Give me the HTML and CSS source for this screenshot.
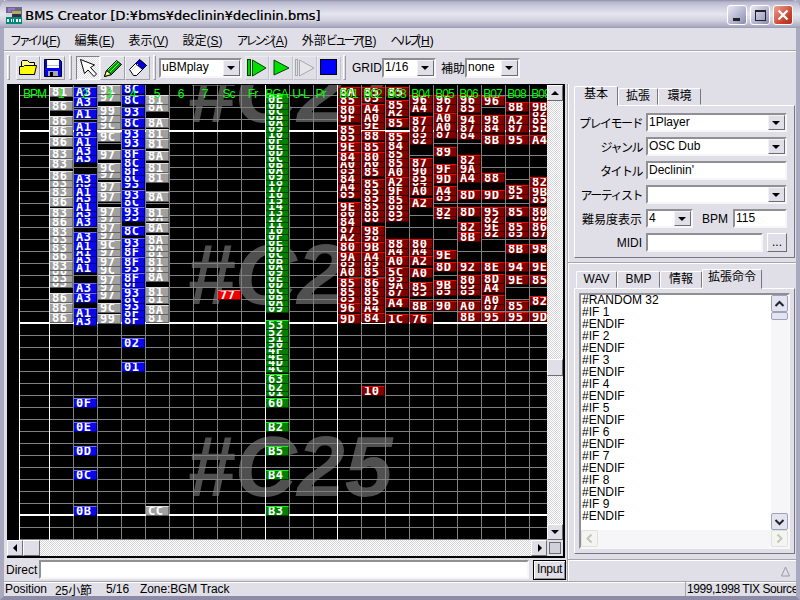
FILE: index.html
```html
<!DOCTYPE html>
<html lang="ja">
<head>
<meta charset="utf-8">
<title>BMS Creator</title>
<link rel="stylesheet" href="styles.css">
</head>
<body>
<div class="window">
  <header class="titlebar">
    <svg class="appicon" width="16" height="17" viewBox="0 0 16 17"><rect width="16" height="17" fill="#6a6a80"/><path d="M2 1h7v2H5v2H2z" fill="#9a70d0"/><path d="M6 4h9v3H6z" fill="#b8a860"/><path d="M0 6h6v4H0z" fill="#d8d8e0"/><path d="M6 7h9v3H6z" fill="#303048"/><rect x="0" y="10" width="16" height="7" fill="#008878"/><path d="M1 12h2v3H1zM5 12h1v3H5zM7 12h1v3H7zM10 12h2v3h-2zM13 12h2v3h-2z" fill="#fff"/></svg>
    <span class="title">BMS Creator [D:¥bms¥declinin¥declinin.bms]</span>
    <div class="winbtns">
      <span class="wb"><svg width="18" height="18" viewBox="0 0 18 18"><rect x="5" y="12" width="7" height="3" fill="#222"/></svg></span>
      <span class="wb"><svg width="18" height="18" viewBox="0 0 18 18"><rect x="4.500" y="4.500" width="10" height="10" fill="none" stroke="#222"/><rect x="4" y="4" width="11" height="2" fill="#222"/></svg></span>
      <span class="wb close"><svg width="18" height="18" viewBox="0 0 18 18"><path d="M4.500 4.500l9 9M13.500 4.500l-9 9" stroke="#fff" stroke-width="2.400"/></svg></span>
    </div>
  </header>
  <nav class="menubar">
    <span class="mi"><span class="kana">ファイル</span>(<u>F</u>)</span><span class="mi">編集(<u>E</u>)</span><span class="mi">表示(<u>V</u>)</span><span class="mi">設定(<u>S</u>)</span><span class="mi"><span class="kana">アレンジ</span>(<u>A</u>)</span><span class="mi">外部<span class="kana">ビューア</span>(<u>B</u>)</span><span class="mi"><span class="kana">ヘルプ</span>(<u>H</u>)</span>
  </nav>
  <div class="toolbar">
    <i class="grip"></i>
    <span class="tb first"><svg width="19" height="17" viewBox="0 0 19 17"><path d="M2.500 15.500V2.500l1-1h5l2 2h5v12z" fill="#ffff80" stroke="#000"/><path d="M.5 15.500v-8h4l1-1h12l-2 9z" fill="#ffff00" stroke="#000"/></svg></span>
    <span class="tb save"><svg width="18" height="18" viewBox="0 0 18 18"><path d="M.5.5h15l2 2v15H.5z" fill="#0000ff" stroke="#000"/><rect x="3" y="1" width="12" height="8" fill="#fff"/><rect x="3" y="6" width="12" height="1" fill="#c0c0c0"/><rect x="4" y="12" width="10" height="5" fill="#a8a8a8"/><rect x="6" y="13" width="3" height="4" fill="#000"/></svg></span>
    <i class="grip g2"></i>
    <span class="tb big pressed"><svg width="19" height="20" viewBox="0 0 19 20"><path d="M1.500 1.500l4 14 3.500-3.500 6 6.500 2.500-2.500-6-6.500 4-2.500z" fill="#fff" stroke="#000"/></svg></span>
    <span class="tb big"><svg width="20" height="20" viewBox="0 0 20 20"><path d="M1.500 18.500l2-6L13.500 2.500l5 4-10 10z" fill="#00a000" stroke="#000"/><path d="M5 12L14 3M7 14l9-9" stroke="#70f070"/><path d="M1.500 18.500l2-6 5 4z" fill="#ffff80" stroke="#000"/></svg></span>
    <span class="tb big"><svg width="20" height="20" viewBox="0 0 20 20"><path d="M1.500 11.500l10-10 7 6-10 10h-3z" fill="#fff" stroke="#000"/><path d="M7.500 5.500l4-4 7 6-4 4z" fill="#0000e0" stroke="#000"/><path d="M4 12l6-6" stroke="#c8c8c8"/></svg></span>
    <i class="grip g3"></i>
    <div class="combo ubm"><span class="val">uBMplay</span><span class="arrow"></span></div>
    <span class="tb play"><svg width="20" height="18" viewBox="0 0 20 18"><rect x=".5" y=".5" width="3" height="16" fill="#00d000" stroke="#004000"/><path d="M5.500 1v16L19 9z" fill="#00e000" stroke="#004000"/></svg></span>
    <span class="tb play"><svg width="17" height="18" viewBox="0 0 17 18"><path d="M1 1v15l15-7z" fill="#00e000" stroke="#004000"/></svg></span>
    <span class="tb play"><svg width="20" height="18" viewBox="0 0 20 18"><rect x=".5" y=".5" width="2" height="16" fill="none" stroke="#a8a8a8"/><path d="M4.500 1v16L19 9z" fill="#e6e6ea" stroke="#a8a8a8"/></svg></span>
    <span class="tb play"><svg width="18" height="18" viewBox="0 0 18 18"><rect x=".5" y=".5" width="16" height="15" fill="#0000ff" stroke="#000"/></svg></span>
    <i class="grip g4"></i>
    <span class="tlabel">GRID</span>
    <div class="combo grid-c"><span class="val">1/16</span><span class="arrow"></span></div>
    <span class="tlabel hojo">補助</span>
    <div class="combo none-c"><span class="val">none</span><span class="arrow"></span></div>
  </div>
  <main class="main">
    <section class="left">
      <div class="editor">
        <div class="canvas" id="canvas">
          <span class="mark m1">#C27</span>
          <span class="mark m2">#C26</span>
          <span class="mark m3">#C25</span>
          <div class="grid-a"></div>
          <div class="grid-b"></div>
          <i class="wv v19"></i><i class="wv v49"></i><i class="wv v265"></i><i class="wv v337"></i>
          <i class="wh h131"></i><i class="wh h323"></i><i class="wh h515"></i>
          <div id="notes"></div>
          <div id="heads"></div>
        </div>
        <div class="vscroll">
          <span class="sb up"></span><span class="track"><i class="thumb-v"></i></span><span class="sb down"></span>
        </div>
        <div class="hscroll">
          <span class="sb leftb"></span><span class="thumb-h"></span><span class="track"></span><span class="sb rightb"></span>
        </div>
        <div class="corner"><i></i></div>
      </div>
      <div class="direct">
        <span class="dlabel">Direct</span>
        <span class="field dfield"></span>
        <span class="inputbtn">Input</span>
      </div>
    </section>
    <aside class="right">
      <div class="tabs top-tabs">
        <span class="tab on t1">基本</span><span class="tab t2">拡張</span><span class="tab t3">環境</span>
      </div>
      <div class="panel basic">
        <div class="row"><label><span class="kana2">プレイモード</span></label><div class="combo fill"><span class="val">1Player</span><span class="arrow"></span></div></div>
        <div class="row"><label><span class="kana2">ジャンル</span></label><div class="combo fill"><span class="val">OSC Dub</span><span class="arrow"></span></div></div>
        <div class="row"><label><span class="kana2">タイトル</span></label><span class="field fill">Declinin'</span></div>
        <div class="row"><label><span class="kana2">アーティスト</span></label><div class="combo fill"><span class="val"></span><span class="arrow"></span></div></div>
        <div class="row"><label>難易度表示</label><div class="combo diff"><span class="val">4</span><span class="arrow"></span></div><span class="bpm">BPM</span><span class="field fill">115</span></div>
        <div class="row"><label>MIDI</label><span class="field fill"></span><span class="dots">...</span></div>
      </div>
      <hr class="rule">
      <div class="tabs low-tabs">
        <span class="tab l1">WAV</span><span class="tab l2">BMP</span><span class="tab l3">情報</span><span class="tab on l4">拡張命令</span>
      </div>
      <div class="panel lower">
        <div class="memo">
          <div class="memo-top">
            <div class="lines">#RANDOM 32<br>#IF 1<br>#ENDIF<br>#IF 2<br>#ENDIF<br>#IF 3<br>#ENDIF<br>#IF 4<br>#ENDIF<br>#IF 5<br>#ENDIF<br>#IF 6<br>#ENDIF<br>#IF 7<br>#ENDIF<br>#IF 8<br>#ENDIF<br>#IF 9<br>#ENDIF</div>
            <div class="mscroll"><span class="mb"><svg width="11" height="8" viewBox="0 0 11 8"><path d="M1.500 6l4-4 4 4" fill="none" stroke="#223" stroke-width="2"/></svg></span><span class="mthumb"></span><span class="mspace"></span><span class="mb"><svg width="11" height="8" viewBox="0 0 11 8"><path d="M1.500 2l4 4 4-4" fill="none" stroke="#223" stroke-width="2"/></svg></span></div>
          </div>
          <div class="memo-bottom"><span class="mdis"><svg width="7" height="11" viewBox="0 0 7 11"><path d="M5.500 1.500l-4 4 4 4" fill="none" stroke="#c4c4c0" stroke-width="2"/></svg></span><span class="mspace"></span><span class="mdis"><svg width="7" height="11" viewBox="0 0 7 11"><path d="M1.500 1.500l4 4-4 4" fill="none" stroke="#c4c4c0" stroke-width="2"/></svg></span></div>
        </div>
      </div>
      <hr class="rule r2">
      <div class="tri-row"><svg width="9" height="11" viewBox="0 0 9 11"><path d="M4.500 1L8.500 10H.5z" fill="none" stroke="#9a9aa0"/></svg></div>
    </aside>
  </main>
  <footer class="status">
    <span class="s1">Position</span><span class="s2">25小節</span><span class="s3">5/16</span><span class="s4">Zone:BGM Track</span><span class="s5">1999,1998 TIX Source</span>
  </footer>
</div>
<script src="script.js"></script>
</body>
</html>
```
FILE: styles.css
```css
* { box-sizing: border-box; }
html, body { margin: 0; padding: 0; }
body { width: 800px; height: 600px; overflow: hidden; background: #e0dfe8; font: 12px "Liberation Sans", "Noto Sans CJK JP", sans-serif; color: #000; }
.window { width: 800px; height: 600px; display: flex; flex-direction: column; background: #e0dfe8; border-left: 4px solid #a9a9c0; border-right: 4px solid #a9a9c0; border-bottom: 4px solid #8c8ca6; box-shadow: inset 1px 0 #e0dfe8, inset -1px 0 #e0dfe8; }
.kana { letter-spacing: -3.200px; }
.kana2 { letter-spacing: -1.500px; }

.titlebar { margin: 0 -4px; height: 28px; flex: none; display: flex; align-items: center; padding: 2px 7px 0 6px; border-radius: 8px 8px 0 0; background: linear-gradient(#8f8fa9 0, #b6b6cb 2px, #c6c6d8 5px, #e6e6f0 14px, #d3d3e0 20px, #aeaec4 26px, #9a9ab4 28px); }
.appicon { flex: none; }
.title { margin-left: 3px; font: 13px "DejaVu Sans", sans-serif; text-shadow: .5px 0 0 rgba(0,0,0,.7), 1px 1px 0 rgba(255,255,255,.3); white-space: nowrap; }
.winbtns { margin-left: auto; display: flex; gap: 3px; }
.wb { width: 20px; height: 20px; border: 1px solid #fff; border-radius: 3px; background: linear-gradient(135deg, #e8e8f4, #a8a8c8 70%, #8888a8); display: block; }
.wb svg { display: block; }
.close { background: linear-gradient(135deg, #f0a090, #c83c28 70%, #b03020); }

.menubar { height: 22px; flex: none; display: flex; align-items: center; margin-left: -1px; }
.mi { padding: 0 7px; white-space: nowrap; }

.toolbar { height: 34px; flex: none; position: relative; display: flex; align-items: center; border-top: 1px solid #a5a5ad; box-shadow: inset 0 1px #fff; padding-left: 3px; }
.grip { flex: none; width: 3px; height: 25px; border: 1px solid; border-color: #fff #9a9aa0 #9a9aa0 #fff; }
.g2 { margin-left: 4px; }
.g3 { margin-left: 3px; }
.g4 { margin-left: 2px; }
.tb { flex: none; display: flex; align-items: center; justify-content: center; width: 24px; height: 24px; border: 1px solid; border-color: #f4f4f8 #a0a0a8 #a0a0a8 #f4f4f8; }
.tb.first { margin-left: 6px; }
.tb.save { width: 25px; }
.tb.big { width: 25px; }
.tb.pressed { width: 24px; margin-left: 4px; border-color: #808086 #fff #fff #808086; background: repeating-conic-gradient(#fff 0 25%, #e0dfe8 0 50%) 0 0 / 2px 2px; }
.tb.play { width: 24px; border-color: #ecebf2 #c4c4cc #c4c4cc #ecebf2; }
.tb svg { display: block; }
.combo { display: flex; height: 19px; border: 2px solid; border-color: #8f8f94 #f7f7fa #f7f7fa #8f8f94; background: #fff; align-items: stretch; }
.toolbar .combo { height: 20px; }
.ubm { width: 83px; margin: 0 3px; }
.grid-c { width: 54px; }
.none-c { width: 55px; }
.val { flex: 1; padding-left: 1px; line-height: 14px; white-space: nowrap; overflow: hidden; }
.arrow { width: 17px; flex: none; background: #e0dfe8; border: 1px solid; border-color: #f4f4f8 #6c6c72 #6c6c72 #f4f4f8; position: relative; }
.arrow::after { content: ""; position: absolute; left: 3px; top: 5px; border: 4px solid transparent; border-top: 4px solid #000; border-bottom: 0; }
.tlabel { margin-left: 6px; white-space: nowrap; }
.hojo { margin-left: 5px; }

.main { flex: 1; display: flex; min-height: 0; }
.left { width: 564px; flex: none; display: flex; flex-direction: column; border-right: 1px solid #a5a5ad; padding-left: 3px; box-shadow: 1px 0 #fff; }
.editor { width: 558px; height: 474px; flex: none; background: #000; padding: 1px 2px 2px 0; display: grid; grid-template-columns: 540px 16px; grid-template-rows: 455px 16px; }
.canvas { position: relative; overflow: hidden; background: #000; }
.mark { position: absolute; font: italic bold 86px "Liberation Sans", sans-serif; color: #505050; line-height: 86px; white-space: nowrap; }
.m1 { left: 180px; top: -36px; }
.m2 { left: 180px; top: 146px; }
.m3 { left: 180px; top: 338px; }
.grid-a, .grid-b { position: absolute; top: 0; bottom: 0; background-repeat: repeat; }
.grid-a { left: 12px; width: 30px; background-image: linear-gradient(#808080 1px, transparent 1px); background-size: 100% 12px; background-position: 0 10px; }
.grid-b { left: 42px; right: 0; background-image: linear-gradient(#808080 1px, transparent 1px), linear-gradient(90deg, #808080 1px, transparent 1px); background-size: 24px 12px; background-position: 0 10px, 0 0; }
.wv { position: absolute; top: 0; bottom: 0; width: 1px; background: #fff; }
.v19 { left: 12px; } .v49 { left: 42px; } .v265 { left: 258px; } .v337 { left: 330px; }
.wh { position: absolute; left: 12px; right: 0; height: 2px; background: #fff; }
.h131 { top: 45px; } .h323 { top: 237px; } .h515 { top: 429px; }

.note { position: absolute; width: 23px; height: 10px; border-top: 1px solid; border-right: 1px solid; border-bottom: 1px solid; color: #fff; font: bold 12px/8px "DejaVu Sans Mono", monospace; padding-left: 2px; letter-spacing: .6px; white-space: nowrap; overflow: hidden; }
.gray { background: #a0a0a0; border-color: #e0e0e0 #707070 #606060; }
.blue { background: #0808e8; border-color: #6a6aff #000090 #000090; }
.green { background: #008000; border-color: #00ff00 #004000 #004000; }
.red { background: #800000; border-color: #ff0000 #400000 #400000; }
.hot { background: #f00000; border-color: #ff7070 #800000 #800000; }
.head { position: absolute; top: 2px; height: 14px; text-align: center; color: #0f0; font: 12px/14px "Liberation Sans", sans-serif; letter-spacing: -1px; white-space: nowrap; }

.vscroll { display: flex; flex-direction: column; }
.hscroll { display: flex; }
.track { flex: 1; position: relative; background: repeating-conic-gradient(#fff 0 25%, #d4d4d8 0 50%) 0 0 / 2px 2px; }
.thumb-v { position: absolute; left: 0; right: 0; top: 258px; height: 17px; background: #e0dfe8; border: 1px solid; border-color: #fff #6c6c72 #6c6c72 #fff; }
.thumb-h { width: 17px; flex: none; background: #e0dfe8; border: 1px solid; border-color: #fff #6c6c72 #6c6c72 #fff; }
.sb { flex: none; display: block; width: 16px; height: 16px; background: #e0dfe8; border: 1px solid; border-color: #fff #6c6c72 #6c6c72 #fff; position: relative; }
.sb::after { content: ""; position: absolute; left: 3px; top: 3px; border: 4px solid transparent; }
.up::after { border-bottom-color: #000; border-top: 0; top: 5px; }
.down::after { border-top-color: #000; border-bottom: 0; top: 5px; }
.leftb::after { border-right-color: #000; border-left: 0; left: 5px; }
.rightb::after { border-left-color: #000; border-right: 0; left: 6px; }
.corner { background: #e0dfe8; padding: 2px; }
.corner i { display: block; width: 12px; height: 12px; border: 1px solid #6c6c72; background: #d0d0d8; }

.direct { display: flex; align-items: center; flex: 1; margin-left: -1px; }
.dlabel { width: 32px; flex: none; }
.field { display: block; height: 19px; border: 2px solid; border-color: #8f8f94 #f7f7fa #f7f7fa #8f8f94; background: #fff; padding-left: 1px; line-height: 14px; white-space: nowrap; overflow: hidden; }
.dfield { width: 490px; margin-left: 1px; }
.inputbtn { width: 33px; height: 20px; margin-left: 4px; border: 1px solid #000; box-shadow: inset 1px 1px #fff, inset -1px -1px #8f8f94; text-align: center; line-height: 17px; letter-spacing: -.3px; }

.right { flex: 1; min-width: 0; display: flex; flex-direction: column; padding-left: 3px; }
.tabs { display: flex; align-items: flex-end; flex: none; position: relative; z-index: 1; }
.top-tabs { height: 21px; padding-left: 3px; }
.low-tabs { height: 24px; padding-left: 5px; }
.tab { display: block; height: 17px; line-height: 15px; text-align: center; border: 1px solid; border-color: #fff #77777d #e0dfe8 #fff; background: #e0dfe8; border-radius: 2px 2px 0 0; }
.tab.on { height: 20px; line-height: 15px; margin-bottom: -1px; position: relative; }
.t1 { width: 44px; } .t2 { width: 40px; } .t3 { width: 43px; }
.l1 { width: 41px; } .l2 { width: 43px; } .l3 { width: 42px; } .l4 { width: 60px; }
.panel { margin-left: 3px; width: 221px; flex: none; border: 1px solid; border-color: #fff #77777d #77777d #fff; }
.basic { height: 153px; padding: 7px 7px 0 0; display: flex; flex-direction: column; gap: 5px; }
.row { display: flex; align-items: center; height: 19px; flex: none; }
.row label { width: 67px; margin-right: 4px; text-align: right; flex: none; white-space: nowrap; }
.fill { flex: 1; min-width: 0; }
.diff { width: 47px; flex: none; }
.bpm { margin: 0 5px 0 9px; }
.dots { flex: none; width: 20px; height: 19px; margin-left: 4px; border: 1px solid; border-color: #fff #6c6c72 #6c6c72 #fff; text-align: center; line-height: 17px; }
.rule { margin: 4px 0 0 -3px; height: 2px; border: 0; background: linear-gradient(#a5a5ad 1px, #fff 1px); flex: none; }
.lower { height: 266px; padding: 4px; }
.memo { width: 211px; height: 256px; border: 2px solid; border-color: #8f8f94 #f7f7fa #f7f7fa #8f8f94; background: #fff; display: flex; flex-direction: column; }
.memo-top { flex: 1; display: flex; min-height: 0; }
.lines { flex: 1; margin-top: -1px; padding-left: 1px; line-height: 12px; }
.mscroll { width: 17px; flex: none; display: flex; flex-direction: column; background: #f6f6f8; }
.mb { height: 17px; flex: none; display: flex; align-items: center; justify-content: center; border: 1px solid #a0a0c0; border-radius: 2px; background: #e4e4ee; }
.mthumb { height: 8px; flex: none; border: 1px solid #a0a0c0; border-radius: 2px; background: #e4e4ee; }
.mspace { flex: 1; }
.memo-bottom { height: 17px; flex: none; display: flex; background: #f6f6f8; }
.mdis { width: 17px; flex: none; display: flex; align-items: center; justify-content: center; border: 1px solid #e0e0dc; border-radius: 2px; background: #f4f4f0; }
.r2 { margin-top: 5px; }
.tri-row { flex: 1; display: flex; justify-content: flex-end; align-items: center; padding-right: 6px; }
.tri-row svg { display: block; }

.status { height: 15px; flex: none; display: flex; align-items: center; border-top: 1px solid #a5a5ad; box-shadow: inset 0 1px #fff; padding-left: 1px; white-space: nowrap; letter-spacing: -.1px; }
.s1 { width: 50px; } .s2 { width: 51px; } .s3 { width: 34px; } .s4 { flex: 1; }
.s5 { width: 111px; padding-left: 1px; border-left: 1px solid #a5a5ad; height: 100%; line-height: 14px; letter-spacing: -.45px; overflow: hidden; }
```
FILE: script.js
```js
var heads = [[20,29,'BPM'],[49,23,'1'],[73,23,'2'],[97,23,'3'],[121,23,'4'],[145,23,'5'],[169,23,'6'],[193,23,'7'],[217,23,'Sc'],[241,23,'Fr'],[265,23,'BGA'],[289,23,'U-L'],[309,23,'Pr'],[337,23,'B01'],[361,23,'B02'],[385,23,'B03'],[409,23,'B04'],[433,23,'B05'],[457,23,'B06'],[481,23,'B07'],[505,23,'B08'],[529,23,'B09']];

var cols = [
 [50,'gray','92 81,106 86,121 86,131 86,142 86,154 83,164 83,176 86,183 83,192 83,202 86,213 83,222 86,232 83,239 83,248 83,256 86,266 83,271 86,278 83,283 83,298 86,308 86,318 86'],
 [74,'blue','92 A3,102 A3,114 A1,127 A1,132 A3,142 A1,151 A3,158 A3,179 A3,183 A3,192 A1,198 A3,207 A1,213 A3,222 A3,237 A3,246 A1,252 A1,259 A3,268 A1,288 A3,298 A3,313 A1,321 A3,403 0F,427 0E,451 0D,475 0C,511 0B'],
 [98,'gray','90 91,97 97,111 99,118 97,125 9C,137 9C,155 97,168 9C,174 97,187 97,197 97,212 97,218 97,228 97,235 97,245 9C,252 97,262 97,270 9C,280 97,287 97,295 97,308 9C,319 99'],
 [122,'blue','89 8C,100 8C,112 93,123 8C,134 93,143 93,154 8F,163 8C,171 8F,178 8C,184 93,195 93,202 8C,212 93,217 93,231 8C,243 93,252 8F,262 8F,268 93,278 8F,283 8F,293 93,299 8C,306 93,313 8F,320 8F,343 02,367 01'],
 [146,'gray','100 81,107 8A,123 8A,134 81,144 81,156 8A,168 81,178 81,197 8A,213 81,217 8A,228 8A,240 8A,247 8A,253 81,262 81,268 81,277 8A,292 81,299 81,310 8A,318 81,511 CC'],
 [266,'green','99 0E,105 0D,111 0C,116 0B,122 0A,128 09,134 10,140 0F,146 0E,152 0D,158 0C,164 0B,170 0A,176 09,182 18,188 17,194 16,200 15,206 14,212 13,218 12,224 11,230 10,236 0F,242 0E,248 0D,254 0C,260 0B,266 0A,272 09,278 0E,284 0D,290 0C,296 0B,302 0A,308 09,325 53,332 52,338 51,344 50,350 4F,356 4E,362 4D,368 4C,379 63,387 62,392 61,403 60,427 B2,451 B5,475 B4,511 B3'],
 [218,'hot','295 77'],
 [338,'red','92 8A,100 85,110 80,118 9F,130 85,137 85,147 9E,157 84,164 A0,170 85,179 84,187 A4,194 85,207 9E,213 80,222 84,229 87,237 A2,247 80,257 9A,263 85,272 A0,283 85,292 85,298 85,308 96,319 9D'],
 [362,'red','92 85,98 85,109 A4,118 A0,125 9E,136 88,147 85,157 80,163 A0,172 85,184 85,191 85,198 85,206 85,213 88,218 88,231 98,237 98,247 9B,257 A4,263 85,272 85,283 86,292 85,301 85,308 A4,318 84,391 10'],
 [386,'red','92 85,105 85,112 A2,123 85,137 85,146 84,154 85,163 85,172 A0,182 A2,191 9F,200 85,206 88,213 85,217 85,244 88,251 A4,261 A0,272 5C,278 85,285 9A,292 87,303 A4,319 1C'],
 [410,'red','100 96,108 A4,121 87,128 87,134 85,140 82,163 87,171 90,178 85,182 84,191 A0,203 A2,244 80,251 A4,261 A2,273 A0,287 85,292 85,306 8B,319 76'],
 [434,'red','100 96,108 87,118 A0,127 A0,134 87,152 89,169 9F,179 9D,191 A4,197 85,212 82,215 82,255 9E,267 8D,285 9B,291 85,306 90'],
 [458,'red','100 96,108 85,120 94,128 87,135 84,160 82,169 9A,178 A4,195 8D,212 8D,227 82,237 8B,267 92,280 80,285 85,291 85,306 A0,317 8B'],
 [482,'red','101 96,120 98,128 84,140 8B,178 88,195 9D,212 95,219 82,227 9E,233 82,267 8E,279 8D,288 A4,300 A0,306 87,317 95'],
 [506,'red','107 8B,120 A2,128 87,140 95,190 85,195 9E,212 85,227 85,233 85,249 8B,267 94,280 9E,306 85,317 95'],
 [530,'red','107 9B,113 82,120 85,128 5E,140 A4,182 82,192 9B,199 85,212 80,217 8D,227 86,233 87,249 98,267 9E,280 85,301 82,317 9D']
];

var CANVAS_X = 7, CANVAS_Y = 85;
var notesBox = document.getElementById('notes');
var headsBox = document.getElementById('heads');

var all = [];
cols.forEach(function (c) {
  c[2].split(',').forEach(function (s) {
    var p = s.split(' ');
    all.push({ x: c[0], kind: c[1], y: +p[0], label: p[1] });
  });
});
// Upper notes are painted over lower ones.
all.sort(function (a, b) { return b.y - a.y; });
all.forEach(function (n) {
  var el = document.createElement('span');
  el.className = 'note ' + n.kind;
  el.style.left = (n.x - CANVAS_X) + 'px';
  el.style.top = (n.y - 5 - CANVAS_Y) + 'px';
  el.textContent = n.label;
  notesBox.appendChild(el);
});
heads.forEach(function (h) {
  var el = document.createElement('span');
  el.className = 'head';
  el.style.left = (h[0] - CANVAS_X) + 'px';
  el.style.width = h[1] + 'px';
  el.textContent = h[2];
  headsBox.appendChild(el);
});
```
